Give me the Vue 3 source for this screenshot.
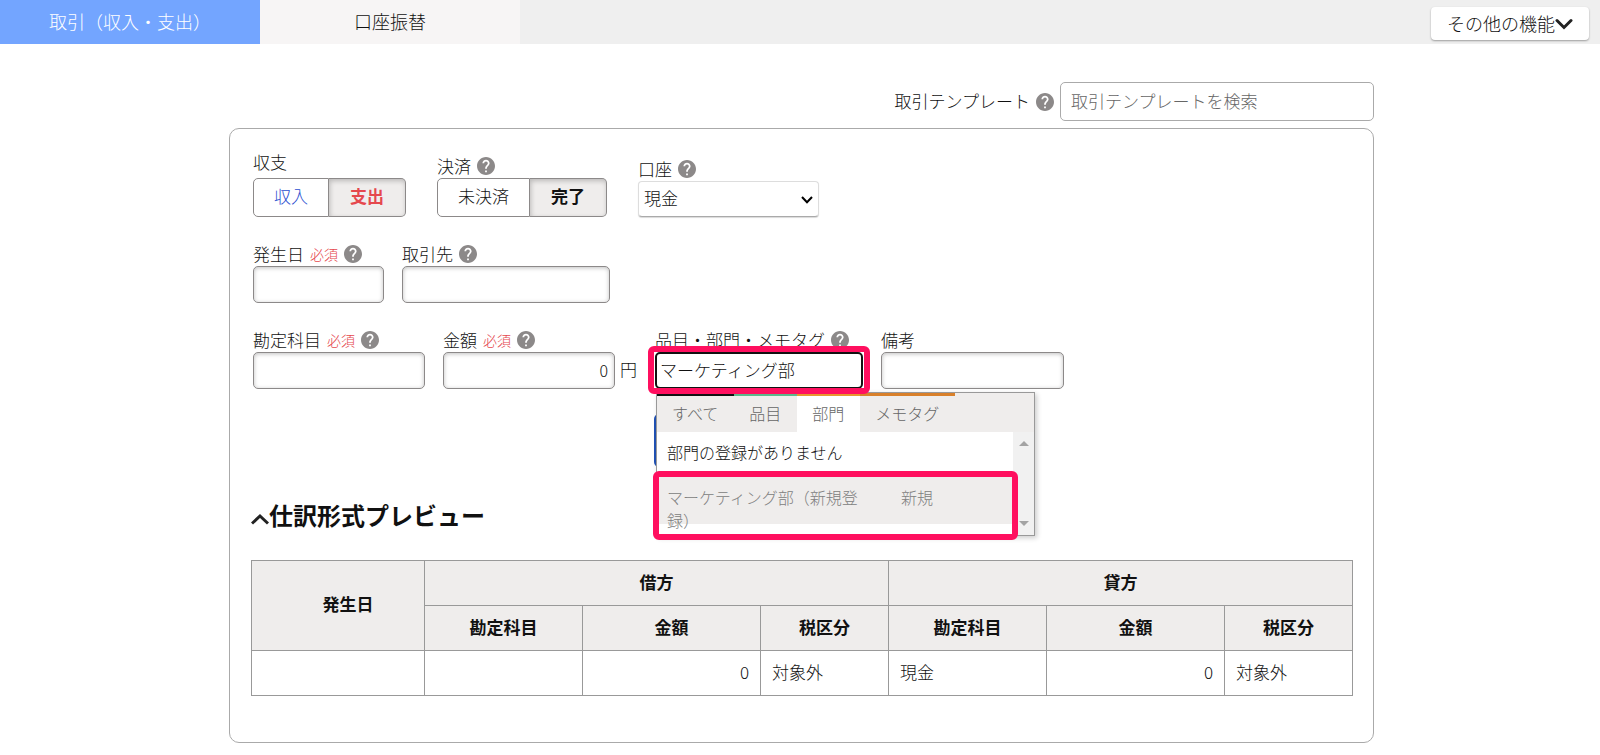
<script setup>
import { ref, computed, h } from 'vue'

const mode = ref('deal')
const side = ref('expense')
const status = ref('done')
const wallet = ref('cash')
const template = ref('')
const issueDate = ref('')
const partner = ref('')
const account = ref('')
const amount = ref('0')
const tag = ref('マーケティング部')
const remark = ref('')
const activeTab = ref('section')

const modes = [
  { key: 'deal', label: '取引（収入・支出）' },
  { key: 'transfer', label: '口座振替' },
]

const tabs = [
  { key: 'all', label: 'すべて' },
  { key: 'item', label: '品目' },
  { key: 'section', label: '部門' },
  { key: 'memo', label: 'メモタグ' },
]

const newTagLabel = computed(() => `${tag.value}（新規登録）`)

// Round question mark next to field labels
const HelpIcon = () =>
  h('svg', { viewBox: '2 2 20 20', width: 18, height: 18, fill: 'currentColor' }, [
    h('path', {
      d: 'M12 2C6.48 2 2 6.48 2 12s4.48 10 10 10 10-4.48 10-10S17.52 2 12 2zm1 17h-2v-2h2v2zm2.07-7.75l-.9.92C13.45 12.9 13 13.5 13 15h-2v-.5c0-1.1.45-2.1 1.17-2.83l1.24-1.26c.37-.36.59-.86.59-1.41 0-1.1-.9-2-2-2s-2 .9-2 2H8c0-2.21 1.79-4 4-4s4 1.79 4 4c0 .88-.36 1.68-.93 2.25z',
    }),
  ])
</script>

<template>
  <div class="page">
    <header class="topbar">
      <nav class="modes">
        <button
          v-for="m in modes"
          :key="m.key"
          type="button"
          class="mode"
          :class="{ active: mode === m.key }"
          @click="mode = m.key"
        >
          {{ m.label }}
        </button>
      </nav>
      <button type="button" class="more">
        <span>その他の機能</span>
        <svg width="18" height="12" viewBox="0 0 18 12" fill="none" stroke="#222" stroke-width="3" stroke-linecap="round">
          <path d="M2 2.5L9 9.5L16 2.5" />
        </svg>
      </button>
    </header>

    <main class="content">
      <div class="template-row">
        <label for="template">取引テンプレート</label>
        <HelpIcon class="help" />
        <input id="template" v-model="template" type="text" class="template-input" placeholder="取引テンプレートを検索" />
      </div>

      <form class="panel" @submit.prevent>
        <div class="fields fields-wide">
          <div class="field">
            <span id="side-label" class="label label-plain">収支</span>
            <div class="segment" role="group" aria-labelledby="side-label">
              <button type="button" class="income" :class="{ on: side === 'income' }" @click="side = 'income'">収入</button>
              <button type="button" class="expense" :class="{ on: side === 'expense' }" @click="side = 'expense'">支出</button>
            </div>
          </div>
          <div class="field">
            <span id="status-label" class="label">決済 <HelpIcon class="help" /></span>
            <div class="segment" role="group" aria-labelledby="status-label">
              <button type="button" :class="{ on: status === 'yet' }" @click="status = 'yet'">未決済</button>
              <button type="button" :class="{ on: status === 'done' }" @click="status = 'done'">完了</button>
            </div>
          </div>
          <div class="field">
            <label class="label" for="wallet">口座 <HelpIcon class="help" /></label>
            <div class="select-wrap">
              <select id="wallet" v-model="wallet">
                <option value="cash">現金</option>
              </select>
              <svg class="select-arrow" width="12" height="8" viewBox="0 0 12 8" fill="none" stroke="#000" stroke-width="2">
                <path d="M1 1L6 6.3L11 1" />
              </svg>
            </div>
          </div>
        </div>

        <div class="fields">
          <div class="field">
            <label class="label" for="date">発生日 <em>必須</em> <HelpIcon class="help" /></label>
            <input id="date" v-model="issueDate" type="text" class="box w-date" />
          </div>
          <div class="field">
            <label class="label" for="partner">取引先 <HelpIcon class="help" /></label>
            <input id="partner" v-model="partner" type="text" class="box w-partner" />
          </div>
        </div>

        <div class="fields">
          <div class="field">
            <label class="label" for="account">勘定科目 <em>必須</em> <HelpIcon class="help" /></label>
            <input id="account" v-model="account" type="text" class="box w-amount" />
          </div>
          <div class="field">
            <label class="label" for="amount">金額 <em>必須</em> <HelpIcon class="help" /></label>
            <div class="with-unit">
              <input id="amount" v-model="amount" type="text" class="box w-amount amount" />
              <span>円</span>
            </div>
          </div>
          <div class="field">
            <label class="label" for="tag">品目・部門・メモタグ <HelpIcon class="help" /></label>
            <div class="tag-wrap">
              <input id="tag" v-model="tag" type="text" class="box w-partner tag" autocomplete="off" />
              <div class="popup">
                <div class="tabs" role="tablist">
                  <button
                    v-for="t in tabs"
                    :key="t.key"
                    type="button"
                    role="tab"
                    class="tab"
                    :class="[t.key, { active: activeTab === t.key }]"
                    @click="activeTab = t.key"
                  >
                    {{ t.label }}
                  </button>
                </div>
                <div class="popup-body">
                  <div class="list">
                    <p class="empty">部門の登録がありません</p>
                    <div class="candidate">
                      <span class="candidate-name">{{ newTagLabel }}</span>
                      <span>新規</span>
                    </div>
                  </div>
                  <div class="scrollbar">
                    <i class="up"></i>
                    <i class="down"></i>
                  </div>
                </div>
                <div class="mark mark-candidate"></div>
              </div>
              <div class="mark mark-input"></div>
            </div>
          </div>
          <div class="field">
            <label class="label" for="remark">備考</label>
            <input id="remark" v-model="remark" type="text" class="box w-remark" />
          </div>
        </div>

        <div class="actions">
          <button type="submit" class="submit"></button>
        </div>

        <h2 class="preview-title">
          <svg width="18" height="12" viewBox="0 0 18 12" fill="none" stroke="#222" stroke-width="3">
            <path d="M1 10.5L9 3L17 10.5" />
          </svg>
          <span>仕訳形式プレビュー</span>
        </h2>

        <table class="preview">
          <colgroup>
            <col class="c-date" />
            <col class="c-account" />
            <col class="c-amount" />
            <col class="c-tax" />
            <col class="c-account" />
            <col class="c-amount" />
            <col class="c-tax" />
          </colgroup>
          <thead>
            <tr>
              <th rowspan="2" class="date-head">発生日</th>
              <th colspan="3">借方</th>
              <th colspan="3">貸方</th>
            </tr>
            <tr>
              <th>勘定科目</th>
              <th>金額</th>
              <th>税区分</th>
              <th>勘定科目</th>
              <th>金額</th>
              <th>税区分</th>
            </tr>
          </thead>
          <tbody>
            <tr>
              <td>{{ issueDate }}</td>
              <td>{{ account }}</td>
              <td class="num">{{ amount }}</td>
              <td>対象外</td>
              <td>現金</td>
              <td class="num">{{ amount }}</td>
              <td>対象外</td>
            </tr>
          </tbody>
        </table>
      </form>
    </main>
  </div>
</template>

<style>
body {
  background: #fff;
}
</style>

<style scoped>
.page,
.page * {
  box-sizing: border-box;
}

.page {
  font-family: 'Noto Sans CJK JP', sans-serif;
  font-size: 17px;
  font-weight: 300;
  line-height: 24px;
  color: #111;
}

button,
input,
select {
  font: inherit;
  color: inherit;
}

button {
  cursor: pointer;
}

.topbar {
  display: flex;
  justify-content: space-between;
  height: 44px;
  padding-right: 11px;
  background: #efefef;
  font-size: 18px;
}

.modes {
  display: flex;
}

.mode {
  width: 260px;
  padding: 0 0 3px;
  border: 0;
  background: #f7f5f5;
}

.mode.active {
  background: #73a5ff;
  color: #fff;
}

.more {
  display: flex;
  align-items: center;
  height: 33px;
  margin-top: 7px;
  padding: 0 16px 1px;
  border: 0;
  border-radius: 4px;
  background: #fff;
  box-shadow: 0 1px 2px rgba(0, 0, 0, 0.35);
}

.more svg {
  margin-top: 2px;
}

.content {
  padding: 38px 226px 11px 229px;
}

.help {
  flex: none;
  color: #8c8989;
}

.template-row {
  display: flex;
  align-items: center;
  justify-content: flex-end;
  gap: 6px;
  margin-bottom: 7px;
}

.template-row label {
  padding-bottom: 2px;
}

.template-input {
  width: 314px;
  height: 39px;
  padding: 0 10px 3px;
  border: 1px solid #aaa;
  border-radius: 5px;
}

.template-input::placeholder {
  color: #666;
  opacity: 1;
}

.panel {
  padding: 21px 21px 46px;
  border: 1px solid #aaa;
  border-radius: 10px;
}

.fields {
  display: flex;
  align-items: flex-start;
  gap: 18px;
  margin-bottom: 25px;
  padding-left: 2px;
}

.fields-wide {
  align-items: flex-end;
  gap: 31px;
}

.label {
  display: flex;
  align-items: center;
  gap: 6px;
  height: 24px;
}

.label-plain {
  margin-bottom: 4px;
}

.label em {
  color: #e5484d;
  font-size: 14px;
  font-style: normal;
}

.segment {
  display: flex;
}

.segment button {
  height: 39px;
  padding: 0 20px 3px;
  border: 1px solid #8c8989;
  border-radius: 5px 0 0 5px;
  background: #fff;
}

.segment button + button {
  padding: 0 21px 3px;
  border-left: 0;
  border-radius: 0 5px 5px 0;
}

.segment .on {
  background: #efedec;
  box-shadow: inset 1px 2px 5px rgba(0, 0, 0, 0.22);
  font-weight: 700;
}

.segment .income {
  color: #2c4fd0;
}

.segment .expense {
  color: #e5484d;
}

.select-wrap {
  position: relative;
}

.select-wrap select {
  appearance: none;
  width: 181px;
  height: 36px;
  padding: 0 5px 2px;
  border: 1px solid #ddd;
  border-bottom-color: #aaa;
  border-radius: 4px;
  background: #fff;
  box-shadow: 0 1px 1px rgba(0, 0, 0, 0.15);
}

.select-arrow {
  position: absolute;
  top: 15px;
  right: 6px;
  pointer-events: none;
}

.box {
  display: block;
  height: 37px;
  padding: 0 6px;
  border: 1px solid #8c8989;
  border-radius: 5px;
  background: #fff;
  box-shadow: inset 0 1px 4px rgba(0, 0, 0, 0.25);
}

.w-date {
  width: 131px;
}

.w-partner {
  width: 208px;
}

.w-amount {
  width: 172px;
}

.w-remark {
  width: 183px;
}

.with-unit {
  display: flex;
  align-items: center;
  gap: 5px;
}

.with-unit span {
  padding-bottom: 3px;
}

.amount {
  padding-bottom: 2px;
  text-align: right;
  font-size: 16px;
}

.tag-wrap {
  position: relative;
}

.tag {
  padding: 0 3px 3px;
  border: 2px solid #111;
  box-shadow: none;
  outline: 0;
}

.popup {
  position: absolute;
  top: 40px;
  left: 1px;
  z-index: 2;
  width: 379px;
  border: 1px solid #999;
  background: #fff;
  box-shadow: 2px 2px 5px rgba(0, 0, 0, 0.2);
  font-size: 16px;
}

.tabs {
  display: flex;
  height: 39px;
  background: #efedec;
}

.tab {
  padding: 0 16px 3px 15px;
  border: 0;
  border-top: 3px solid;
  background: none;
  color: #666;
}

.tab.all {
  border-color: #111;
}

.tab.item {
  border-color: #5bb98b;
}

.tab.section {
  border-color: #e8962e;
}

.tab.memo {
  border-color: #d9812b;
}

.tab.active {
  background: #fff;
}

.popup-body {
  display: flex;
  height: 103px;
}

.list {
  flex: 1;
}

.empty {
  margin: 0;
  padding: 8px 10px 10px;
}

.candidate {
  display: flex;
  gap: 40px;
  height: 50px;
  padding: 12px 10px;
  background: #efedec;
  color: #808080;
  line-height: 23px;
}

.candidate-name {
  width: 194px;
}

.scrollbar {
  display: flex;
  flex-direction: column;
  align-items: center;
  justify-content: space-between;
  width: 21px;
  padding: 9px 0;
  background: #f1f1f1;
}

.up,
.down {
  border: 5px solid transparent;
}

.up {
  border-top: 0;
  border-bottom-color: #a3a3a3;
}

.down {
  border-bottom: 0;
  border-top-color: #a3a3a3;
}

/* highlight frames drawn over the tag input and the new candidate */
.mark {
  position: absolute;
  z-index: 3;
  border: 6px solid #ff0f5f;
  border-radius: 6px;
  pointer-events: none;
}

.mark-input {
  top: -6px;
  left: -7px;
  width: 222px;
  height: 48px;
}

.mark-candidate {
  top: 78px;
  left: -4px;
  width: 365px;
  height: 69px;
}

.actions {
  display: flex;
  justify-content: center;
}

.submit {
  width: 296px;
  height: 53px;
  border: 0;
  border-radius: 5px;
  background: #2052b5;
}

.preview-title {
  display: flex;
  align-items: center;
  margin: 30px 0 27px;
  font-size: 24px;
  font-weight: 700;
  line-height: 36px;
}

.preview-title svg {
  margin-top: 8px;
}

.preview {
  width: 100%;
  table-layout: fixed;
  border-collapse: collapse;
}

.preview th,
.preview td {
  height: 45px;
  padding: 0 11px 3px;
  border: 1px solid #999;
  text-align: left;
}

.preview th {
  background: #efedec;
  font-weight: 700;
  text-align: center;
}

.preview .date-head {
  padding-left: 31px;
}

.preview .num {
  text-align: right;
}

.c-date {
  width: 173px;
}

.c-account {
  width: 158px;
}

.c-amount {
  width: 178px;
}

.c-tax {
  width: 128px;
}
</style>
